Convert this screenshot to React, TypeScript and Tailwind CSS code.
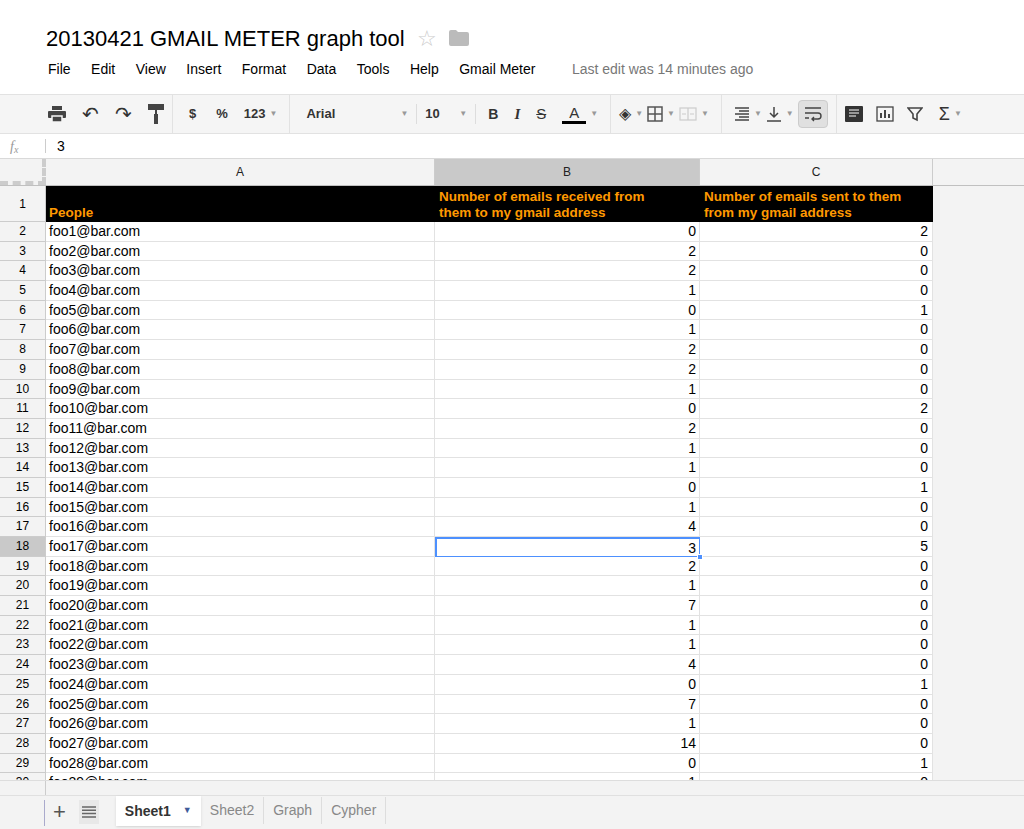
import React from "react";

const B = [0,2,2,1,0,1,2,2,1,0,2,1,1,0,1,4,3,2,1,7,1,1,4,0,7,1,14,0,1];
const C = [2,0,0,0,1,0,0,0,0,2,0,0,0,1,0,0,5,0,0,0,0,0,0,1,0,0,0,1,0];

const Caret = () => <span className="text-[8px] text-[#999] mx-1">▼</span>;
const Sep = () => <div className="w-px h-[38px] bg-[#e2e2e2] mx-2" />;

export default function App() {
  return (
    <div className="w-[1024px] h-[829px] overflow-hidden bg-white flex flex-col" style={{ fontFamily: '"Liberation Sans", Arial, sans-serif' }}>
      <div className="h-[94px] flex flex-col pl-[46px]">
        <div className="flex items-center h-[30px] mt-[23px]">
          <span className="text-[22px] text-black">20130421 GMAIL METER graph tool</span>
          <span className="ml-3 text-[22px] text-[#ccc]">☆</span>
          <svg className="ml-3" width="20" height="16" viewBox="0 0 20 16"><path d="M0 2a2 2 0 0 1 2-2h5l2 2h9a2 2 0 0 1 2 2v10a2 2 0 0 1-2 2H2a2 2 0 0 1-2-2z" fill="#bbb"/></svg>
        </div>
        <div className="flex items-center gap-[20.5px] text-[14px] text-black mt-[6px] ml-[2px]">
          <span>File</span><span>Edit</span><span>View</span><span>Insert</span><span>Format</span><span>Data</span><span>Tools</span><span>Help</span><span>Gmail Meter</span>
          <span className="ml-[16px] text-[#777]">Last edit was 14 minutes ago</span>
        </div>
      </div>
      <div className="h-[40px] bg-[#f5f5f5] border-y border-[#e2e2e2] flex items-center pl-[48px] text-[13px] text-[#333]">
        <svg width="18" height="16" viewBox="0 0 18 16" fill="#444"><rect x="4" y="0" width="10" height="4"/><rect x="0" y="5" width="18" height="7" rx="1"/><rect x="4" y="10" width="10" height="6" fill="#444" stroke="#f5f5f5" strokeWidth="1.5"/></svg>
        <span className="ml-4 text-[20px] leading-none">↶</span>
        <span className="ml-4 text-[20px] leading-none">↷</span>
        <svg className="ml-4" width="16" height="20" viewBox="0 0 16 20" fill="#444"><rect x="0" y="0" width="16" height="6"/><rect x="7" y="6" width="2" height="4"/><rect x="6" y="10" width="4" height="10"/></svg>
        <Sep />
        <span className="font-bold ml-2">$</span>
        <span className="font-bold ml-5">%</span>
        <span className="font-bold ml-4">123</span><Caret />
        <Sep />
        <span className="font-bold ml-2 w-[90px]">Arial</span><Caret />
        <div className="w-px h-[20px] bg-[#ddd] mx-1" />
        <span className="font-bold ml-1 w-[30px]">10</span><Caret />
        <div className="w-px h-[20px] bg-[#ddd] mx-1" />
        <span className="font-bold ml-2 text-[14px]">B</span>
        <span className="italic font-bold ml-4 text-[15px]" style={{ fontFamily: '"Liberation Serif", serif' }}>I</span>
        <span className="line-through ml-4 text-[15px]">S</span>
        <span className="ml-4 flex flex-col items-center"><span className="text-[15px] leading-none">A</span><span className="w-[24px] h-[3px] bg-black mt-[1px]" /></span><Caret />
        <Sep />
        <span className="text-[16px]">◈</span><Caret />
        <svg width="16" height="16" viewBox="0 0 16 16" fill="none" stroke="#555" strokeWidth="1.5"><rect x="1" y="1" width="14" height="14"/><path d="M8 1v14M1 8h14"/></svg><Caret />
        <svg width="18" height="14" viewBox="0 0 18 14" fill="none" stroke="#ccc" strokeWidth="1.2"><rect x="1" y="1" width="16" height="12"/><path d="M9 1v12M3 7h4M11 7h4"/></svg><Caret />
        <Sep />
        <svg className="ml-1" width="16" height="14" viewBox="0 0 16 14" stroke="#444" strokeWidth="1.4"><path d="M1 1h14M5 4h10M1 7h14M5 10h10M1 13h14"/></svg><Caret />
        <svg width="16" height="16" viewBox="0 0 16 16" stroke="#444" strokeWidth="1.5" fill="none"><path d="M8 1v10M4 7l4 4 4-4M1 15h14"/></svg><Caret />
        <div className="w-[30px] h-[28px] bg-[#e0e0e0] border border-[#ccc] rounded-sm flex items-center justify-center">
          <svg width="18" height="16" viewBox="0 0 18 16" stroke="#444" strokeWidth="1.4" fill="none"><path d="M1 2h16M1 7h13a3 3 0 0 1 0 6H8M1 12h4M10 11l-2 2 2 2"/></svg>
        </div>
        <Sep />
        <svg width="18" height="16" viewBox="0 0 18 16"><rect x="0" y="0" width="18" height="16" rx="1" fill="#333"/><path d="M4 4h10M4 7h10M4 10h7" stroke="#fff" strokeWidth="1"/></svg>
        <svg className="ml-3" width="20" height="18" viewBox="0 0 20 18" fill="none" stroke="#444" strokeWidth="1.3"><rect x="2" y="2" width="16" height="14"/><path d="M6 13V8M10 13V5M14 13V9" strokeWidth="2"/></svg>
        <svg className="ml-3" width="16" height="16" viewBox="0 0 16 16" fill="none" stroke="#444" strokeWidth="1.6"><path d="M1 2h14l-5 6v6l-4-2V8z"/></svg>
        <span className="ml-4 text-[18px]">Σ</span><Caret />
      </div>
      <div className="h-[25px] flex items-center border-b border-[#d9d9d9] text-[14px]">
        <span className="w-[46px] pl-[10px] text-[#999] italic" style={{ fontFamily: '"Liberation Serif", serif' }}>f<sub className="text-[10px]">x</sub></span>
        <div className="w-px h-[14px] bg-[#ccc] -ml-[1px] mr-[11px]" />
        <span>3</span>
      </div>
      <div className="flex-1 overflow-hidden bg-[#f3f3f3] text-[14px]">
        <div className="flex h-[27px] text-[12px] text-[#222] border-b border-[#c0c0c0]">
          <div className="w-[46px] bg-[#f3f3f3] border-r-4 border-b-4 border-[#ccc] border-dashed" />
          <div className="w-[389px] bg-[#f3f3f3] border-r border-[#ccc] flex items-center justify-center">A</div>
          <div className="w-[265px] bg-[#c9c9c9] border-r border-[#ccc] flex items-center justify-center">B</div>
          <div className="w-[233px] bg-[#f3f3f3] border-r border-[#ccc] flex items-center justify-center">C</div>
        </div>
        <div className="flex h-[36px]">
          <div className="w-[46px] bg-[#f3f3f3] border-r border-b border-[#ccc] text-[12px] flex items-center justify-center">1</div>
          <div className="w-[887px] bg-black flex text-[#ff9900] font-bold text-[13.5px] leading-[16px]">
            <div className="w-[389px] flex items-end pl-[3px] pb-[1px]">People</div>
            <div className="w-[265px] flex items-end pl-[4px] pb-[1px]">Number of emails received from<br/>them to my gmail address</div>
            <div className="w-[233px] flex items-end pl-[4px] pb-[1px]">Number of emails sent to them<br/>from my gmail address</div>
          </div>
        </div>
        {B.map((b, i) => {
          const r = i + 2;
          const sel = r === 18;
          return (
            <div key={r} className="flex h-[19.7px] leading-[19px]">
              <div className={`w-[46px] ${sel ? "bg-[#c9c9c9]" : "bg-[#f3f3f3]"} border-r border-b border-[#ccc] text-[12px] text-center`}>{r}</div>
              <div className="w-[389px] bg-white border-r border-b border-[#e2e2e2] pl-[3px]">foo{i + 1}@bar.com</div>
              <div className={`w-[265px] bg-white border-r border-b ${sel ? "border-2 border-[#4d90fe] relative" : "border-[#e2e2e2]"} text-right pr-[3px]`}>
                {b}
                {sel && <span className="absolute -right-[4px] -bottom-[4px] w-[6px] h-[6px] bg-[#4d90fe] border border-white" />}
              </div>
              <div className="w-[233px] bg-white border-r border-b border-[#e2e2e2] text-right pr-[4px]">{C[i]}</div>
            </div>
          );
        })}
      </div>
      <div className="h-[15px] bg-[#f3f3f3] border-t border-[#ddd] flex"><div className="w-[46px] border-r border-[#ccc]" /></div>
      <div className="h-[34px] bg-[#f3f3f3] border-t border-[#e0e0e0] flex items-start text-[14px]">
        <div className="ml-[44px] mt-[4px] w-px h-[26px] bg-[#aac]" />
        <span className="ml-[8px] mt-[4px] text-[22px] leading-[24px] text-[#555]">+</span>
        <span className="ml-[13px] mt-[4px] w-[20px] h-[24px] bg-[#e8e8e8] flex items-center justify-center">
          <svg width="14" height="12" viewBox="0 0 14 12" stroke="#666" strokeWidth="1.5"><path d="M0 1h14M0 4.3h14M0 7.6h14M0 11h14"/></svg>
        </span>
        <div className="ml-[17px] w-[85px] h-[30px] bg-white flex items-center pl-[9px] font-bold text-[#333] shadow-sm">Sheet1<span className="ml-3 text-[9px] text-[#3f5b9a]">▼</span></div>
        <div className="h-[27px] mt-[1px] flex items-center px-[9px] text-[#888] border-r border-[#ddd]">Sheet2</div>
        <div className="h-[27px] mt-[1px] flex items-center px-[9px] text-[#888] border-r border-[#ddd]">Graph</div>
        <div className="h-[27px] mt-[1px] flex items-center px-[9px] text-[#888] border-r border-[#ddd]">Cypher</div>
      </div>
    </div>
  );
}
